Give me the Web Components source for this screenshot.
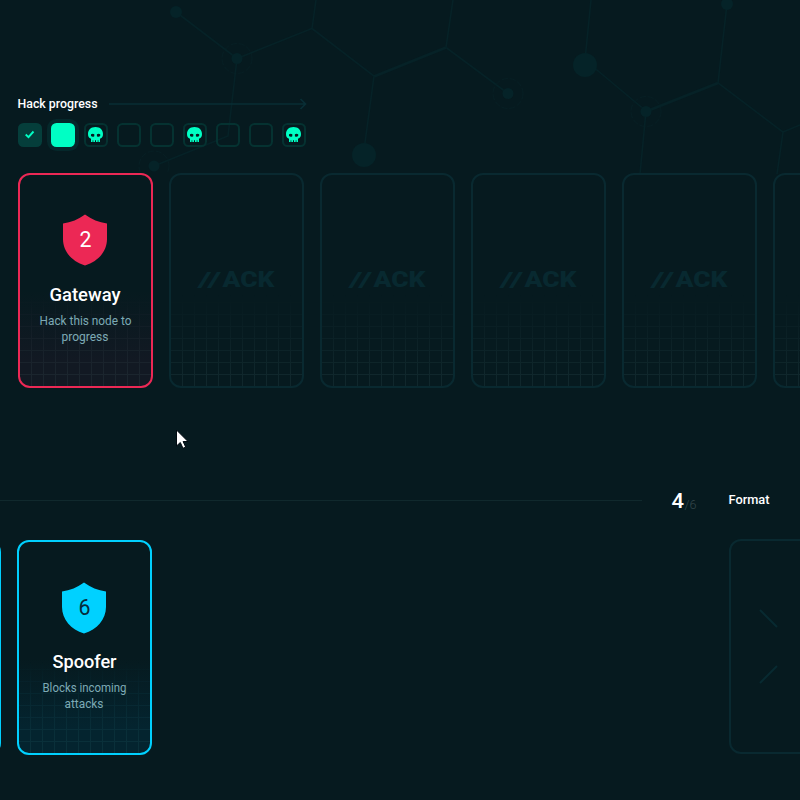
<!DOCTYPE html>
<html lang="en">
<head>
<meta charset="utf-8">
<title>Hack</title>
<style>
html,body{margin:0;height:100%;background:#061a1f}
body{overflow:hidden;font-family:Roboto,"Liberation Sans",sans-serif}
</style>
</head>
<body>
<hack-board></hack-board>
<script>
const define = (name, render) => customElements.define(name, class extends HTMLElement {
  connectedCallback() {
    if (this.shadowRoot) return;
    this.attachShadow({mode:'open'}).innerHTML = render(this);
  }
});

// One line of text fitted to a given width: w = width, s = font size.
define('fit-text', el => {
  const w = +el.getAttribute('w'), s = +el.getAttribute('s'), h = Math.ceil(s * 1.23);
  return `<style>:host{display:block;width:${w}px;height:${h}px}svg{display:block;overflow:visible}</style>
  <svg width="${w}" height="${h}"><text x="-.5" y="${Math.round(s * .93)}" font-size="${s}" fill="currentColor"
   font-weight="${el.getAttribute('weight') || 500}" textLength="${w}" lengthAdjust="spacingAndGlyphs">${el.textContent}</text></svg>`;
});

define('node-web', () => `<style>:host{display:block;position:absolute;inset:0}svg{display:block}</style>
<svg width="800" height="174" fill="none" stroke="#062227" stroke-width="1.6">
 <path d="M176 12L237 58.500L312 28.500L316 0M237 58.500L228 136L154 166M312 28.500L374 76L364 150M446 47.500L453 0M446 47.500L508 93.500M591 0L585 60L646 111L640 174M727 4L718 83L783 132L777 174M783 132L800 125"/>
 <path d="M374 76.500L446 47.500M646 111.500L718 83" stroke-width="2.8"/>
 <g fill="#052328" stroke="none"><circle cx="176" cy="12" r="6"/><circle cx="237" cy="58.500" r="5.500"/><circle cx="154" cy="166" r="5.500"/><circle cx="364" cy="155" r="12"/><circle cx="508" cy="93.500" r="5.500"/><circle cx="585" cy="65" r="12"/><circle cx="646" cy="111.500" r="5.500"/><circle cx="727" cy="4" r="6"/></g>
 <g stroke="#072126" stroke-width=".8" stroke-dasharray="6 2"><circle cx="237" cy="58.500" r="15"/><circle cx="154" cy="166" r="15"/><circle cx="508" cy="93.500" r="15"/><circle cx="646" cy="111.500" r="15"/></g>
</svg>`);

define('progress-step', el => {
  const k = el.getAttribute('kind');
  const icon = k === 'done'
    ? '<svg width="24" height="24"><path d="M7.700 11.500L10.500 14.100L15.500 8.500" fill="none" stroke="#00ffc4" stroke-width="1.900"/></svg>'
    : k === 'boss'
    ? '<svg width="24" height="24"><path fill="#00ffc4" fill-rule="evenodd" d="M11.500 4C6.800 4 4 6.800 4 11C4 13.500 4.800 15 7 15.800V19H8.600V17.200H9.300V19H11V17.200H12V19H13.700V17.200H14.400V19H16V15.800C18.200 15 19 13.500 19 11C19 6.800 16.200 4 11.500 4ZM7 11.200Q9 10.500 10.300 11.200V13.200Q8.500 14.300 7 13ZM12.900 11.200Q14.500 10.500 16.200 11.200V13Q14.700 14.300 12.900 13.200Z"/></svg>' : '';
  return `<style>:host{display:block;box-sizing:border-box;width:24px;height:24px;border-radius:5.500px;
   ${k === 'done' ? 'background:#053e3b' : k === 'active' ? 'background:#00ffc4;box-shadow:0 0 0 4px #05282b' : 'box-shadow:inset 0 0 0 2px #053231'}}
   svg{display:block}</style>${icon}`;
});

define('hack-progress', () => `<style>:host{display:block;position:relative;width:290px}
.head{display:flex;align-items:center;height:16px;gap:11px;color:#fff}.head svg{display:block}
.steps{display:flex;gap:9px;margin-top:11px;padding-left:.500px}</style>
<div class="head"><fit-text w="80" s="13">Hack progress</fit-text>
<svg width="200" height="16" fill="none" stroke="#092e35" stroke-width="1.700"><path d="M0 8H197M191.500 3L196.500 8L191.500 13"/></svg></div>
<div class="steps">${['done','active','boss','','','boss','','','boss'].map(k => `<progress-step kind="${k}"></progress-step>`).join('')}</div>`);

define('shield-badge', el => `<style>:host{display:grid;width:44px;height:52px;place-items:center}
svg,fit-text{grid-area:1/1}svg{display:block}fit-text{color:var(--num,#fff);margin-left:2px}</style>
<svg width="44" height="52"><path fill="var(--accent)" d="M22 .500C15.500 5.500 8 8.300 0 9.500V25C0 37.500 9 47.500 22 51.500C35 47.500 44 37.500 44 25V9.500C36 8.300 28.500 5.500 22 .500Z"/></svg>
<fit-text w="12" s="21.500" weight="${el.getAttribute('weight') || 500}">${el.textContent}</fit-text>`);

define('game-card', () => `<style>
:host{display:grid;position:relative;flex:none;box-sizing:border-box;width:135px;height:215px;border:2px solid var(--accent,#092930);border-radius:12px;background:linear-gradient(#061a1f 55%,var(--tint,#061a1f) 88%);overflow:hidden}
.grid,.body{grid-area:1/1}
.grid{align-self:end;height:91px;background-image:linear-gradient(90deg,transparent 11px,var(--line,#10272c) 11px),linear-gradient(transparent 11px,var(--line,#10272c) 11px);background-size:12px 12px;background-position:0 0,0 68px;-webkit-mask-image:linear-gradient(transparent,#000 85%)}
:host([plain]) .grid{display:none}
.body{position:relative;display:flex;flex-direction:column;align-items:center}</style>
<div class="grid"></div><div class="body"><slot></slot></div>`);

define('node-card', el => {
  const a = n => el.getAttribute(n);
  const lines = a('lines').split('|').map(l => l.split(':'));
  return `<style>:host{display:block;flex:none}
  shield-badge{margin-top:${a('top')}px;margin-right:1px}
  .name{color:#fff;margin-top:${a('gap')}px}.desc{display:flex;flex-direction:column;align-items:center;color:#7daab5;margin-top:6px}
  .desc fit-text{height:16px}</style>
  <game-card><shield-badge weight="400">${a('level')}</shield-badge>
  <fit-text class="name" w="${a('namewidth')}" s="18">${a('name')}</fit-text>
  <div class="desc">${lines.map(([t,w]) => `<fit-text w="${w}" s="13" weight="400">${t}</fit-text>`).join('')}</div></game-card>`;
});

define('hidden-card', el => `<style>:host{display:block;flex:none}.logo{display:flex;margin-top:92px;color:#082930;font-family:Roboto,sans-serif}
.slashes{margin-right:1px}</style>
<game-card>${el.hasAttribute('blank') ? '' : '<div class="logo"><fit-text class="slashes" w="24" s="21" weight="700">//</fit-text><fit-text w="52" s="21.500" weight="900">ACK</fit-text></div>'}</game-card>`);

define('format-card', () => `<style>:host{display:block;flex:none}svg{display:block}</style>
<game-card plain><svg width="131" height="211" stroke="#082a31" stroke-width="2"><path d="M29 69L46 86M46 125L29 142"/></svg></game-card>`);

define('deck-counter', () => `<style>:host{display:flex;align-items:center;height:28px}
.rule{width:642px;height:1px;background:#10292d}.count{display:flex;margin:1px 0 0 30px;color:#fff}
.total{color:#34474b;margin-top:9px}.fmt{color:#fff;margin-left:32px}</style>
<div class="rule"></div><div class="count"><fit-text w="12.500" s="21">4</fit-text><fit-text class="total" w="12" s="12.500" weight="300">/6</fit-text></div>
<fit-text class="fmt" w="41" s="13">Format</fit-text>`);

define('mouse-pointer', () => `<style>:host{display:block;position:absolute;left:176px;top:429px}svg{display:block}</style>
<svg width="14" height="21"><path fill="#fff" stroke="#020b12" d="M.500 1V17L4.300 13.500L7 19.300L9.700 18.100L7.100 12.500H12Z"/></svg>`);

define('hack-board', () => `<style>
:host{display:flex;flex-direction:column;position:relative;width:800px;height:800px;overflow:hidden}
hack-progress{margin:96px 0 0 17.500px}
.nodes{display:flex;gap:16px;position:relative;margin:26px 0 0 18px}
.red{--accent:#ec2855;--tint:#121923;--line:#1b252e}
.blue{--accent:#00d1ff;--tint:#04242f;--line:#0a303a;--num:#062b3b}
deck-counter{margin-top:98px}
.deck{display:flex;gap:16px;margin:25px 0 0 -134px;align-items:flex-start}
.deck node-card,.deck .blue{margin-top:1px}
format-card{margin-left:561px}</style>
<node-web></node-web>
<hack-progress></hack-progress>
<div class="nodes"><node-card class="red" level="2" top="39" gap="18" name="Gateway" namewidth="71" lines="Hack this node to:92|progress:47"></node-card>${'<hidden-card></hidden-card>'.repeat(4)}<hidden-card blank></hidden-card></div>
<deck-counter></deck-counter>
<div class="deck"><game-card class="blue"></game-card><node-card class="blue" level="6" top="40" gap="17" name="Spoofer" namewidth="64" lines="Blocks incoming:84|attacks:39"></node-card><format-card></format-card></div>
<mouse-pointer></mouse-pointer>`);
</script>
</body>
</html>
